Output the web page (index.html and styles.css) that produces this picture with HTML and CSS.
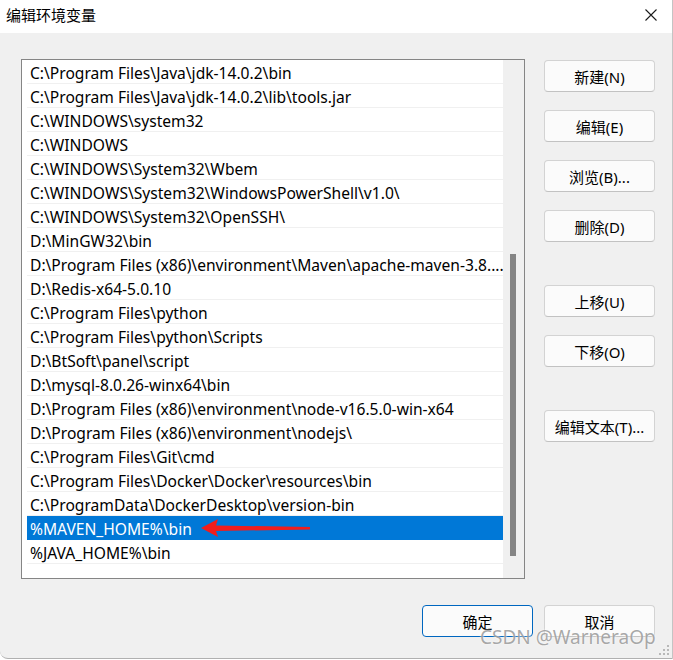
FILE: index.html
```html
<!DOCTYPE html>
<html lang="zh-CN">
<head>
  <meta charset="UTF-8" />
  <title>编辑环境变量</title>
  <link rel="stylesheet" href="styles.css">
</head>
<body>

<div class="window">
  <header class="titlebar">
    <span class="title">编辑环境变量</span>
    <svg class="close" width="12" height="12" viewBox="0 0 12 12">
      <path d="M0.5 0.5 L11.5 11.5 M11.5 0.5 L0.5 11.5" stroke="#1a1a1a" stroke-width="1.1" fill="none"/>
    </svg>
  </header>

  <div class="content">
    <div class="main">
      <div class="list">
        <ul class="rows">
          <li>C:\Program Files\Java\jdk-14.0.2\bin</li>
          <li>C:\Program Files\Java\jdk-14.0.2\lib\tools.jar</li>
          <li>C:\WINDOWS\system32</li>
          <li>C:\WINDOWS</li>
          <li>C:\WINDOWS\System32\Wbem</li>
          <li>C:\WINDOWS\System32\WindowsPowerShell\v1.0\</li>
          <li>C:\WINDOWS\System32\OpenSSH\</li>
          <li>D:\MinGW32\bin</li>
          <li>D:\Program Files (x86)\environment\Maven\apache-maven-3.8....</li>
          <li>D:\Redis-x64-5.0.10</li>
          <li>C:\Program Files\python</li>
          <li>C:\Program Files\python\Scripts</li>
          <li>D:\BtSoft\panel\script</li>
          <li>D:\mysql-8.0.26-winx64\bin</li>
          <li>D:\Program Files (x86)\environment\node-v16.5.0-win-x64</li>
          <li>D:\Program Files (x86)\environment\nodejs\</li>
          <li>C:\Program Files\Git\cmd</li>
          <li>C:\Program Files\Docker\Docker\resources\bin</li>
          <li>C:\ProgramData\DockerDesktop\version-bin</li>
          <li class="selected">%MAVEN_HOME%\bin</li>
          <li>%JAVA_HOME%\bin</li>
          <li class="empty"></li>
        </ul>
        <div class="scrollbar"><div class="thumb"></div></div>
      </div>

      <div class="side">
        <button class="btn">新建(N)</button>
        <button class="btn">编辑(E)</button>
        <button class="btn">浏览(B)...</button>
        <button class="btn">删除(D)</button>
        <button class="btn group">上移(U)</button>
        <button class="btn">下移(O)</button>
        <button class="btn group">编辑文本(T)...</button>
      </div>
    </div>

    <div class="footer">
      <button class="btn default">确定</button>
      <button class="btn">取消</button>
    </div>
  </div>

  <!-- annotation arrow drawn over the list -->
  <svg class="arrow" width="120" height="26" viewBox="0 0 120 26">
    <polygon points="1,13 18,4 16,10.5 110,12 110,14.5 16,16 18,22" fill="#f01d1d"/>
  </svg>

  <div class="watermark">CSDN @WarneraOp</div>

  <svg class="grip" width="14" height="14" viewBox="0 0 14 14">
    <rect x="11" y="2" width="2" height="2" fill="#b8b8b8"/>
    <rect x="7" y="6" width="2" height="2" fill="#b8b8b8"/>
    <rect x="11" y="6" width="2" height="2" fill="#b8b8b8"/>
    <rect x="3" y="10" width="2" height="2" fill="#b8b8b8"/>
    <rect x="7" y="10" width="2" height="2" fill="#b8b8b8"/>
    <rect x="11" y="10" width="2" height="2" fill="#b8b8b8"/>
  </svg>
</div>

</body>
</html>
```

FILE: styles.css
```css
body {
  margin: 0;
  font-family: 'Noto Sans', 'Noto Sans CJK SC', sans-serif;
  background: #fff;
  color: #000;
}

.window {
  position: relative;
  width: 673px;
  height: 659px;
  box-sizing: border-box;
  border-right: 1px solid #c4c4c4;
  border-bottom: 1px solid #b0b0b0;
  border-bottom-left-radius: 8px;
  background: #f0f0f0;
  overflow: hidden;
}

.titlebar {
  height: 33px;
  background: #fff;
  display: flex;
  align-items: center;
  justify-content: space-between;
  padding: 0 15px 4px 6px;
  box-sizing: border-box;
}

.title {
  font-size: 15px;
}

.content {
  padding: 26px 17px 0 21px;
}

.main {
  display: flex;
  gap: 19px;
}

.list {
  width: 504px;
  height: 520px;
  box-sizing: border-box;
  border: 1px solid #858585;
  background: #fff;
  display: flex;
}

.rows {
  list-style: none;
  margin: 0;
  padding: 0 0 0 5px;
  width: 481px;
  box-sizing: border-box;
}

.rows li {
  height: 24px;
  line-height: 20px;
  box-sizing: border-box;
  border-bottom: 1px solid #f0f0f0;
  padding: 3px 0 0 3px;
  font-size: 15.6px;
  white-space: nowrap;
  overflow: hidden;
}

.rows li.selected {
  background: #0078d7;
  border-bottom-color: #0078d7;
  color: #fff;
}

.rows li.empty {
  border-bottom: none;
}

.scrollbar {
  flex: 1;
  background: #f0f0f0;
  position: relative;
}

.thumb {
  position: absolute;
  left: 7px;
  top: 194px;
  width: 6px;
  height: 302px;
  background: #858585;
}

.side {
  display: flex;
  flex-direction: column;
  gap: 18px;
  padding-top: 1px;
}

.btn {
  width: 111px;
  height: 32px;
  padding: 0;
  background: #fbfbfb;
  border: 1px solid #d3d3d3;
  border-bottom-color: #c2c2c2;
  border-radius: 4px;
  font-family: 'Noto Sans', 'Noto Sans CJK SC', sans-serif;
  font-size: 15px;
  color: #000;
}

.btn.group {
  margin-top: 25px;
}

.btn.default {
  border: 1px solid #0067c0;
}

.footer {
  display: flex;
  justify-content: flex-end;
  gap: 11px;
  margin-top: 26px;
}

.arrow {
  position: absolute;
  left: 200px;
  top: 515px;
}

.watermark {
  position: absolute;
  left: 480px;
  top: 624px;
  font-family: 'Noto Sans', sans-serif;
  font-size: 19px;
  color: rgba(140, 140, 140, 0.75);
  text-shadow: 0 0 2px #fff;
}

.grip {
  position: absolute;
  right: 2px;
  bottom: 1px;
}
```
